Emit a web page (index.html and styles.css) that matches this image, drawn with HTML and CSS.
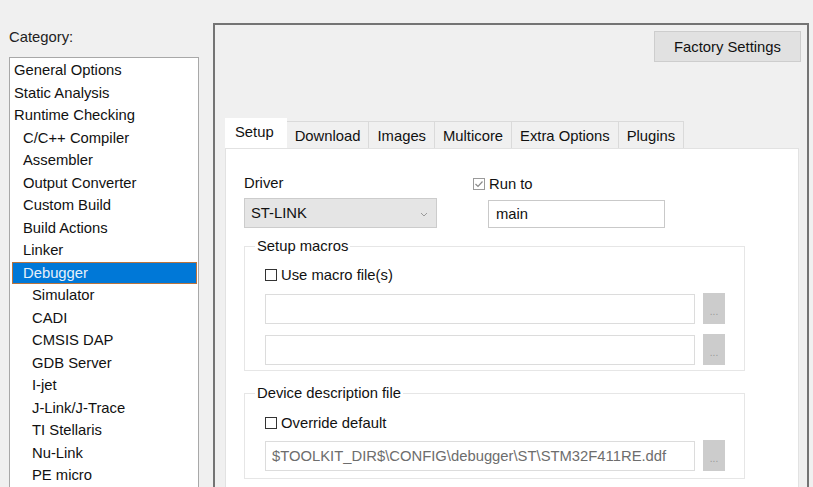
FILE: index.html
```html
<!DOCTYPE html>
<html>
<head>
<meta charset="utf-8">
<link rel="stylesheet" href="styles.css">
</head>
<body>
<div class="window">
  <div class="left">
    <div class="cat-label">Category:</div>
    <ul class="list">
      <li class="l0">General Options</li>
      <li class="l0">Static Analysis</li>
      <li class="l0">Runtime Checking</li>
      <li class="l1">C/C++ Compiler</li>
      <li class="l1">Assembler</li>
      <li class="l1">Output Converter</li>
      <li class="l1">Custom Build</li>
      <li class="l1">Build Actions</li>
      <li class="l1">Linker</li>
      <li class="l1 sel">Debugger</li>
      <li class="l2">Simulator</li>
      <li class="l2">CADI</li>
      <li class="l2">CMSIS DAP</li>
      <li class="l2">GDB Server</li>
      <li class="l2">I-jet</li>
      <li class="l2">J-Link/J-Trace</li>
      <li class="l2">TI Stellaris</li>
      <li class="l2">Nu-Link</li>
      <li class="l2">PE micro</li>
    </ul>
  </div>
  <div class="frame">
    <div class="top-row">
      <button class="factory">Factory Settings</button>
    </div>
    <div class="tabs">
      <div class="tab active">Setup</div>
      <div class="tab">Download</div>
      <div class="tab">Images</div>
      <div class="tab">Multicore</div>
      <div class="tab">Extra Options</div>
      <div class="tab">Plugins</div>
    </div>
    <div class="panel">
      <div class="driver-row">
        <div class="driver-col">
          <div class="lbl">Driver</div>
          <div class="combo"><span>ST-LINK</span><svg class="chev" width="8" height="5" viewBox="0 0 8 5"><path d="M1 1 L4 4 L7 1" fill="none" stroke="#9a9a9a" stroke-width="1"/></svg></div>
        </div>
        <div class="runto-col">
          <div class="check-row"><svg class="cb" width="12" height="12" viewBox="0 0 12 12"><rect x="0.5" y="0.5" width="11" height="11" fill="#fff" stroke="#9a9a9a"/><path d="M2.5 6 L5 8.5 L9.5 3.5" fill="none" stroke="#8a8a8a" stroke-width="1.2"/></svg><span>Run to</span></div>
          <div class="input main-input">main</div>
        </div>
      </div>
      <fieldset class="group g1">
        <legend>Setup macros</legend>
        <div class="check-row"><svg class="cb" width="12" height="12" viewBox="0 0 12 12"><rect x="0.5" y="0.5" width="11" height="11" fill="#fff" stroke="#333"/></svg><span>Use macro file(s)</span></div>
        <div class="file-row r1"><div class="input wide"></div><div class="dots">...</div></div>
        <div class="file-row r2"><div class="input wide"></div><div class="dots">...</div></div>
      </fieldset>
      <fieldset class="group g2">
        <legend>Device description file</legend>
        <div class="check-row"><svg class="cb" width="12" height="12" viewBox="0 0 12 12"><rect x="0.5" y="0.5" width="11" height="11" fill="#fff" stroke="#333"/></svg><span>Override default</span></div>
        <div class="file-row r3"><div class="input wide path">$TOOLKIT_DIR$\CONFIG\debugger\ST\STM32F411RE.ddf</div><div class="dots">...</div></div>
      </fieldset>
    </div>
  </div>
</div>
</body>
</html>
```

FILE: styles.css
```css
html, body {
  margin: 0;
  padding: 0;
  background: #f0f0f0;
  overflow: hidden;
}
body {
  font-family: "Liberation Sans", Arial, sans-serif;
  font-size: 14.8px;
  color: #111;
  width: 813px;
  height: 487px;
}
.window {
  display: flex;
  height: 487px;
}
.left {
  width: 204px;
  padding-left: 9px;
  box-sizing: border-box;
  flex: none;
}
.cat-label {
  margin-top: 29px;
  height: 16px;
  line-height: 16px;
  color: #222;
}
.list {
  list-style: none;
  margin: 12px 0 0 0;
  padding: 1px 0 0 0;
  width: 190px;
  height: 470px;
  box-sizing: border-box;
  border: 1px solid #a8a8a8;
  border-bottom: none;
  background: #fff;
}
.list li {
  height: 22.5px;
  line-height: 22.5px;
  white-space: nowrap;
  color: #111;
}
.l0 { padding-left: 4px; }
.l1 { padding-left: 13px; }
.l2 { padding-left: 22px; }
.list li.sel {
  margin: 0 1px 0 2px;
  padding-left: 10px;
  background: #0078d7;
  color: #e6f0fa;
  border: 1px solid #b9743e;
  box-sizing: border-box;
  line-height: 20.5px;
}
.frame {
  margin-left: 9px;
  margin-top: 23px;
  width: 596px;
  flex: none;
  box-sizing: border-box;
  border: 2px solid #747474;
  border-bottom: none;
  padding: 6px 8px 0 10px;
  display: flex;
  flex-direction: column;
}
.top-row {
  display: flex;
  justify-content: flex-end;
  margin-right: -2px;
}
.factory {
  width: 147px;
  height: 31px;
  background: #e1e1e1;
  border: 1px solid #cdcdcd;
  font-family: "Liberation Sans", Arial, sans-serif;
  font-size: 14.8px;
  color: #111;
  padding: 0;
}
.tabs {
  display: flex;
  align-items: flex-end;
  margin-top: 56px;
  height: 30px;
}
.tab {
  height: 27px;
  line-height: 28px;
  padding: 0 8px;
  border: 1px solid #dadada;
  border-bottom: none;
  border-left: none;
  box-sizing: border-box;
  background: #f0f0f0;
  color: #111;
}
.tab.active {
  height: 30px;
  line-height: 28px;
  padding: 0 13px 0 10px;
  background: #fff;
  border: none;
}
.panel {
  background: #fff;
  border: 1px solid #e2e2e2;
  border-bottom: none;
  flex: 1;
  padding: 26px 0 0 18px;
}
.driver-row {
  display: flex;
}
.driver-col {
  width: 193px;
}
.lbl {
  height: 16px;
  line-height: 16px;
}
.combo {
  margin-top: 7px;
  height: 30px;
  box-sizing: border-box;
  background: #e5e5e5;
  border: 1px solid #cccccc;
  display: flex;
  align-items: center;
  justify-content: space-between;
  padding: 0 8px 0 6px;
}
.chev { margin-top: 2px; }
.runto-col {
  margin-left: 36px;
  margin-top: 1px;
}
.check-row {
  display: flex;
  align-items: center;
  height: 16px;
  line-height: 16px;
}
.cb {
  margin-right: 4px;
  flex: none;
}
.input {
  background: #fff;
  border: 1px solid #c9c9c9;
  box-sizing: border-box;
}
.main-input {
  margin-left: 15px;
  margin-top: 8px;
  width: 177px;
  height: 28px;
  line-height: 26px;
  padding-left: 7px;
}
.group {
  margin: 0;
  width: 501px;
  box-sizing: border-box;
  border: 1px solid #e6e6e6;
  padding: 0 0 0 20px;
}
.group legend {
  padding: 0 2px;
  margin-left: -10px;
  height: 16px;
  line-height: 16px;
}
.g1 {
  margin-top: 10px;
  padding-bottom: 5px;
}
.g1 .check-row { margin-top: 13px; }
.g2 {
  margin-top: 14px;
  padding-bottom: 7px;
}
.g2 .check-row { margin-top: 14px; }
.file-row {
  display: flex;
  align-items: center;
}
.r1 { margin-top: 10px; }
.r2 { margin-top: 10px; }
.r3 { margin-top: 9px; }
.input.wide {
  width: 430px;
  height: 30px;
  border-color: #dcdcdc;
}
.path {
  color: #6d6d6d;
  line-height: 28px;
  padding-left: 6px;
  white-space: nowrap;
}
.dots {
  margin-left: 8px;
  width: 22px;
  height: 31px;
  background: #cccccc;
  color: #999;
  font-size: 10px;
  text-align: center;
  line-height: 38px;
  box-sizing: border-box;
}
```
